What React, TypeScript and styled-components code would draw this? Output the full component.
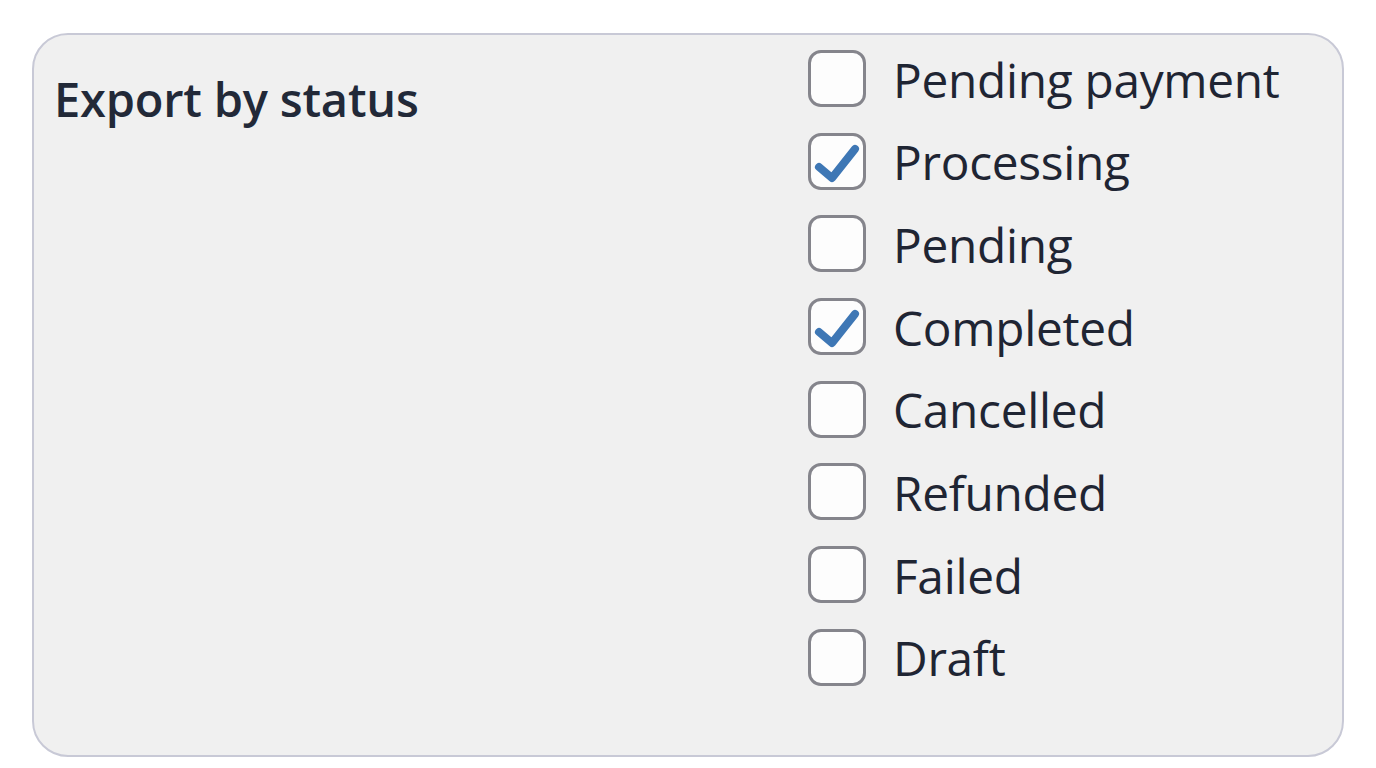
import styled, { createGlobalStyle } from "styled-components";

const GlobalStyle = createGlobalStyle`
  body {
    margin: 0;
    background: #ffffff;
    font-family: "Open Sans", "Noto Sans", sans-serif;
  }
`;

const Page = styled.div`
  padding: 33px 32px 0 32px;
`;

const Panel = styled.section`
  box-sizing: border-box;
  width: 1312px;
  height: 724px;
  border: 2px solid #c8c9d6;
  border-radius: 36px;
  background: #f0f0f0;
  display: grid;
  grid-template-columns: 754px 1fr;
  padding: 15px 20px 0 20px;
`;

const Title = styled.h2`
  margin: 0;
  padding-top: 19px;
  font-size: 47px;
  font-weight: 600;
  color: #222938;
  letter-spacing: -0.2px;
  line-height: 1.3;
`;

const StatusList = styled.ul`
  list-style: none;
  margin: 0;
  padding: 0;
  display: flex;
  flex-direction: column;
  gap: 25.7px;
`;

const Row = styled.li`
  display: flex;
  align-items: center;
  gap: 27px;
  height: 57px;
`;

const Box = styled.span`
  box-sizing: border-box;
  flex: none;
  width: 58px;
  height: 57px;
  border: 3px solid #85858c;
  border-radius: 13px;
  background: #fdfdfd;
  display: flex;
  align-items: center;
  justify-content: center;
`;

const Label = styled.span`
  font-size: 47.8px;
  color: #1f2533;
  padding-top: 1px;
  letter-spacing: -0.3px;
  white-space: nowrap;
`;

const Check = () => (
  <svg width="52" height="51" viewBox="0 0 52 51">
    <path
      d="M8 31 L21 42 L44 13"
      fill="none"
      stroke="#3e77b5"
      strokeWidth="8"
      strokeLinecap="round"
      strokeLinejoin="round"
    />
  </svg>
);

const statuses = [
  { label: "Pending payment", checked: false },
  { label: "Processing", checked: true },
  { label: "Pending", checked: false },
  { label: "Completed", checked: true },
  { label: "Cancelled", checked: false },
  { label: "Refunded", checked: false },
  { label: "Failed", checked: false },
  { label: "Draft", checked: false },
];

export default function App() {
  return (
    <>
      <GlobalStyle />
      <Page>
        <Panel>
          <Title>Export by status</Title>
          <StatusList>
            {statuses.map((s) => (
              <Row key={s.label}>
                <Box>{s.checked && <Check />}</Box>
                <Label>{s.label}</Label>
              </Row>
            ))}
          </StatusList>
        </Panel>
      </Page>
    </>
  );
}
